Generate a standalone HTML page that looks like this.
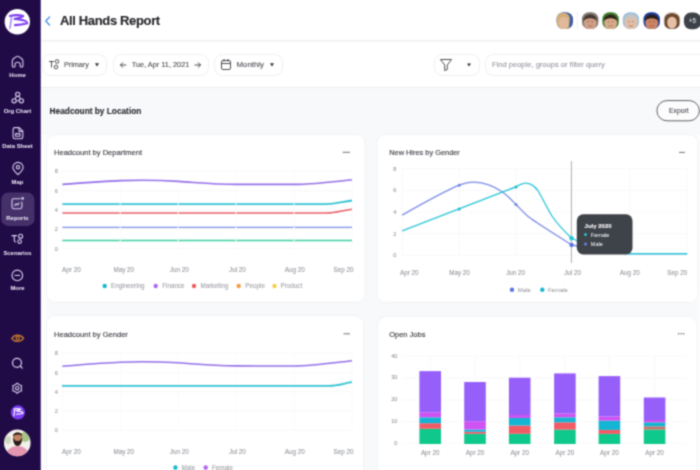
<!DOCTYPE html>
<html><head><meta charset="utf-8">
<style>
html,body{margin:0;padding:0;width:700px;height:470px;overflow:hidden;background:#f8f9fb;font-family:"Liberation Sans", sans-serif;}
#sb{position:absolute;left:0;top:0;width:40px;height:470px;background:#210b47;border-right:1px solid #5e4e8e;}
#hdr{position:absolute;left:41px;top:0;width:659px;height:40px;background:#fff;border-bottom:2px solid #f3f3f4;}
#tb{position:absolute;left:41px;top:42px;width:659px;height:45px;background:#fff;border-bottom:1px solid #ededee;}
.sbl{position:absolute;left:0;width:35px;text-align:center;color:#ece8f7;font-size:5.9px;font-weight:700;line-height:8px;height:8px;white-space:nowrap;}
svg{position:absolute;left:0;top:0;}
text{font-family:"Liberation Sans", sans-serif;}
#wrap{position:absolute;left:0;top:0;width:700px;height:470px;overflow:hidden;filter:url(#gb);}
</style></head><body><svg width="0" height="0" style="position:absolute"><filter id="gb" x="0" y="0" width="100%" height="100%" color-interpolation-filters="sRGB"><feConvolveMatrix order="3" kernelMatrix="0.04387 0.12171 0.04387 0.12171 0.33767 0.12171 0.04387 0.12171 0.04387" divisor="1" edgeMode="duplicate"/></filter></svg><div id="wrap">
<div id="sb"></div>
<div id="hdr"></div>
<div id="tb"></div>
<svg width="700" height="470" viewBox="0 0 700 470">
<text x="60.0" y="25.4" font-size="13" fill="#26262b" stroke="#26262b" stroke-width="0.12" font-weight="700" text-anchor="start" letter-spacing="-0.35" >All Hands Report</text>
<path d="M49.5,17 L45.8,21 L49.5,25" fill="none" stroke="#4a8fe7" stroke-width="1.3" stroke-linecap="round" stroke-linejoin="round"/>
<rect x="42.5" y="54.5" width="64.0" height="21.0" rx="8" fill="#fff" stroke="#eff0f3" stroke-width="1"/>
<rect x="113.5" y="54.5" width="95.0" height="21.0" rx="8" fill="#fff" stroke="#eff0f3" stroke-width="1"/>
<rect x="214.5" y="54.5" width="68.0" height="21.0" rx="8" fill="#fff" stroke="#eff0f3" stroke-width="1"/>
<rect x="434.5" y="54.5" width="45.0" height="21.0" rx="8" fill="#fff" stroke="#eff0f3" stroke-width="1"/>
<rect x="485.5" y="54.5" width="234.0" height="21.0" rx="8" fill="#fff" stroke="#eff0f3" stroke-width="1"/>
<text x="64.0" y="66.9" font-size="7.2" fill="#505258" stroke="#505258" stroke-width="0.12" font-weight="400" text-anchor="start" letter-spacing="0" >Primary</text>
<path d="M95,63.3 L99,63.3 L97,66.6 Z" fill="#2e3036"/>
<g fill="none" stroke="#3a3c42" stroke-width="0.9"><path d="M49,61.5 L54,61.5 M51.5,61.5 L51.5,67.5"/><circle cx="57" cy="61.5" r="1.8"/><circle cx="56" cy="67" r="1.8"/></g>
<path d="M126,65 L120.5,65 M122.8,62.7 L120.5,65 L122.8,67.3" fill="none" stroke="#3a3c42" stroke-width="0.9" stroke-linecap="round"/>
<text x="131.8" y="67.0" font-size="7.35" fill="#505258" stroke="#505258" stroke-width="0.12" font-weight="400" text-anchor="start" letter-spacing="0" >Tue, Apr 11, 2021</text>
<path d="M195,65 L200.5,65 M198.2,62.7 L200.5,65 L198.2,67.3" fill="none" stroke="#3a3c42" stroke-width="0.9" stroke-linecap="round"/>
<g fill="none" stroke="#3a3c42" stroke-width="0.9"><rect x="221.5" y="60.5" width="9" height="9" rx="1.5"/><path d="M221.5,63.5 L230.5,63.5 M224,59 L224,61.5 M228,59 L228,61.5"/></g>
<text x="236.6" y="67.1" font-size="7.8" fill="#505258" stroke="#505258" stroke-width="0.12" font-weight="400" text-anchor="start" letter-spacing="0" >Monthly</text>
<path d="M270,63.3 L274,63.3 L272,66.6 Z" fill="#2e3036"/>
<path d="M440.5,59.5 L451.5,59.5 L447.3,65 L447.3,69.5 L444.7,70.5 L444.7,65 Z" fill="none" stroke="#3a3c42" stroke-width="0.9" stroke-linejoin="round"/>
<path d="M467,63.6 L471,63.6 L469,66.6 Z" fill="#2e3036"/>
<text x="492.0" y="67.1" font-size="7.55" fill="#9a9ca3" stroke="#9a9ca3" stroke-width="0.12" font-weight="400" text-anchor="start" letter-spacing="0" >Find people, groups or filter query</text>
<text x="49.6" y="113.5" font-size="8.3" fill="#2b2c31" stroke="#2b2c31" stroke-width="0.12" font-weight="700" text-anchor="start" letter-spacing="0" >Headcount by Location</text>
<rect x="656.9" y="100.6" width="42.4" height="20.2" rx="10.1" fill="#fcfcfd" stroke="#606166" stroke-width="1"/>
<text x="669.0" y="112.8" font-size="6.75" fill="#3a3b40" stroke="#3a3b40" stroke-width="0.048" font-weight="400" text-anchor="start" letter-spacing="0" >Export</text>
<rect x="41" y="134.5" width="5.8" height="340" fill="#fcfcfd"/><rect x="697.3" y="134.5" width="3" height="340" fill="#fcfcfd"/>
<rect x="46.6" y="134.7" width="318.4" height="167.7" rx="8.5" fill="#fff" stroke="#eef0f3" stroke-width="0.8"/>
<rect x="377" y="134.7" width="321" height="167.7" rx="8.5" fill="#fff" stroke="#eef0f3" stroke-width="0.8"/>
<rect x="46.6" y="315.5" width="316.9" height="184.5" rx="8.5" fill="#fff" stroke="#eef0f3" stroke-width="0.8"/>
<rect x="377.6" y="316.6" width="319.4" height="183.39999999999998" rx="8.5" fill="#fff" stroke="#eef0f3" stroke-width="0.8"/>
<text x="54.0" y="155.0" font-size="7.55" fill="#3a3c42" stroke="#3a3c42" stroke-width="0.12" font-weight="400" text-anchor="start" letter-spacing="0" >Headcount by Department</text>
<path d="M342.6,152.3 L350,152.3" stroke="#6a6c71" stroke-width="0.95"/>
<path d="M62,248.5 L352,248.5" stroke="#f6f7f9" stroke-width="0.7"/>
<text x="56.4" y="250.5" font-size="5.6" fill="#8f9197" stroke="#8f9197" stroke-width="0.048" font-weight="400" text-anchor="middle" letter-spacing="0" >0</text>
<path d="M62,229.2 L352,229.2" stroke="#f6f7f9" stroke-width="0.7"/>
<text x="56.4" y="231.2" font-size="5.6" fill="#8f9197" stroke="#8f9197" stroke-width="0.048" font-weight="400" text-anchor="middle" letter-spacing="0" >2</text>
<path d="M62,209.9 L352,209.9" stroke="#f6f7f9" stroke-width="0.7"/>
<text x="56.4" y="211.9" font-size="5.6" fill="#8f9197" stroke="#8f9197" stroke-width="0.048" font-weight="400" text-anchor="middle" letter-spacing="0" >4</text>
<path d="M62,190.6 L352,190.6" stroke="#f6f7f9" stroke-width="0.7"/>
<text x="56.4" y="192.6" font-size="5.6" fill="#8f9197" stroke="#8f9197" stroke-width="0.048" font-weight="400" text-anchor="middle" letter-spacing="0" >6</text>
<path d="M62,171.3 L352,171.3" stroke="#f6f7f9" stroke-width="0.7"/>
<text x="56.4" y="173.3" font-size="5.6" fill="#8f9197" stroke="#8f9197" stroke-width="0.048" font-weight="400" text-anchor="middle" letter-spacing="0" >8</text>
<path d="M62.4,171.3 L62.4,248.5" stroke="#f9f9fb" stroke-width="0.7"/>
<path d="M120.3,171.3 L120.3,248.5" stroke="#f9f9fb" stroke-width="0.7"/>
<path d="M178.2,171.3 L178.2,248.5" stroke="#f9f9fb" stroke-width="0.7"/>
<path d="M236.2,171.3 L236.2,248.5" stroke="#f9f9fb" stroke-width="0.7"/>
<path d="M294.1,171.3 L294.1,248.5" stroke="#f9f9fb" stroke-width="0.7"/>
<path d="M352.0,171.3 L352.0,248.5" stroke="#f9f9fb" stroke-width="0.7"/>
<text x="71.4" y="271.9" font-size="6.3" fill="#8f9197" stroke="#8f9197" stroke-width="0.048" font-weight="400" text-anchor="middle" letter-spacing="0" >Apr 20</text>
<text x="123.8" y="271.9" font-size="6.3" fill="#8f9197" stroke="#8f9197" stroke-width="0.048" font-weight="400" text-anchor="middle" letter-spacing="0" >May 20</text>
<text x="179.3" y="271.9" font-size="6.3" fill="#8f9197" stroke="#8f9197" stroke-width="0.048" font-weight="400" text-anchor="middle" letter-spacing="0" >Jun 20</text>
<text x="237.4" y="271.9" font-size="6.3" fill="#8f9197" stroke="#8f9197" stroke-width="0.048" font-weight="400" text-anchor="middle" letter-spacing="0" >Jul 20</text>
<text x="294.8" y="271.9" font-size="6.3" fill="#8f9197" stroke="#8f9197" stroke-width="0.048" font-weight="400" text-anchor="middle" letter-spacing="0" >Aug 20</text>
<text x="343.6" y="271.9" font-size="6.3" fill="#8f9197" stroke="#8f9197" stroke-width="0.048" font-weight="400" text-anchor="middle" letter-spacing="0" >Sep 20</text>
<path d="M62.4,240.5 C110.7,240.5 303.7,240.5 352.0,240.5" fill="none" stroke="#3ccfa2" stroke-width="1.6"/>
<path d="M62.4,227.3 C110.7,227.3 303.7,227.3 352.0,227.3" fill="none" stroke="#7f90e6" stroke-width="1.3"/>
<path d="M62.4,213 L326,213 C336,213 342,210.5 352,209.2" fill="none" stroke="#e9606a" stroke-width="1.6"/>
<path d="M62.4,204.1 L326,204.1 C336,204.1 342,201.7 352,200.5" fill="none" stroke="#34c3d4" stroke-width="1.8"/>
<path d="M62.4,184.4 C85,182.6 105,181 120.3,180.6 C135,180.2 155,179.9 178.2,181.4 C200,182.8 215,184.4 236.2,184.4 L294.1,184.4 C312,184.4 330,182.2 352,179.7" fill="none" stroke="#9470e8" stroke-width="1.6"/>
<circle cx="120.3" cy="240.5" r="0.9" fill="#fff" opacity="0.7"/>
<circle cx="120.3" cy="227.3" r="0.9" fill="#fff" opacity="0.7"/>
<circle cx="120.3" cy="213.0" r="0.9" fill="#fff" opacity="0.7"/>
<circle cx="120.3" cy="204.1" r="0.9" fill="#fff" opacity="0.7"/>
<circle cx="178.2" cy="240.5" r="0.9" fill="#fff" opacity="0.7"/>
<circle cx="178.2" cy="227.3" r="0.9" fill="#fff" opacity="0.7"/>
<circle cx="178.2" cy="213.0" r="0.9" fill="#fff" opacity="0.7"/>
<circle cx="178.2" cy="204.1" r="0.9" fill="#fff" opacity="0.7"/>
<circle cx="236.2" cy="240.5" r="0.9" fill="#fff" opacity="0.7"/>
<circle cx="236.2" cy="227.3" r="0.9" fill="#fff" opacity="0.7"/>
<circle cx="236.2" cy="213.0" r="0.9" fill="#fff" opacity="0.7"/>
<circle cx="236.2" cy="204.1" r="0.9" fill="#fff" opacity="0.7"/>
<circle cx="294.1" cy="240.5" r="0.9" fill="#fff" opacity="0.7"/>
<circle cx="294.1" cy="227.3" r="0.9" fill="#fff" opacity="0.7"/>
<circle cx="294.1" cy="213.0" r="0.9" fill="#fff" opacity="0.7"/>
<circle cx="294.1" cy="204.1" r="0.9" fill="#fff" opacity="0.7"/>
<circle cx="104.7" cy="286" r="2.2" fill="#17b7d0"/>
<text x="111.0" y="288.3" font-size="6.3" fill="#9a9ca2" stroke="#9a9ca2" stroke-width="0.048" font-weight="400" text-anchor="start" letter-spacing="0" >Engineering</text>
<circle cx="155.7" cy="286" r="2.2" fill="#b065f0"/>
<text x="162.2" y="288.3" font-size="6.3" fill="#9a9ca2" stroke="#9a9ca2" stroke-width="0.048" font-weight="400" text-anchor="start" letter-spacing="0" >Finance</text>
<circle cx="194" cy="286" r="2.2" fill="#ef5d5d"/>
<text x="200.5" y="288.3" font-size="6.3" fill="#9a9ca2" stroke="#9a9ca2" stroke-width="0.048" font-weight="400" text-anchor="start" letter-spacing="0" >Marketing</text>
<circle cx="238.7" cy="286" r="2.2" fill="#f49a45"/>
<text x="245.3" y="288.3" font-size="6.3" fill="#9a9ca2" stroke="#9a9ca2" stroke-width="0.048" font-weight="400" text-anchor="start" letter-spacing="0" >People</text>
<circle cx="274.5" cy="286" r="2.2" fill="#f7cd4c"/>
<text x="280.5" y="288.3" font-size="6.3" fill="#9a9ca2" stroke="#9a9ca2" stroke-width="0.048" font-weight="400" text-anchor="start" letter-spacing="0" >Product</text>
<text x="54.0" y="336.6" font-size="7.55" fill="#3a3c42" stroke="#3a3c42" stroke-width="0.12" font-weight="400" text-anchor="start" letter-spacing="0" >Headcount by Gender</text>
<path d="M343.5,333.8 L350,333.8" stroke="#6a6c71" stroke-width="0.95"/>
<path d="M62,430.4 L352,430.4" stroke="#f6f7f9" stroke-width="0.7"/>
<text x="56.4" y="432.4" font-size="5.6" fill="#8f9197" stroke="#8f9197" stroke-width="0.048" font-weight="400" text-anchor="middle" letter-spacing="0" >0</text>
<path d="M62,411.1 L352,411.1" stroke="#f6f7f9" stroke-width="0.7"/>
<text x="56.4" y="413.1" font-size="5.6" fill="#8f9197" stroke="#8f9197" stroke-width="0.048" font-weight="400" text-anchor="middle" letter-spacing="0" >2</text>
<path d="M62,391.8 L352,391.8" stroke="#f6f7f9" stroke-width="0.7"/>
<text x="56.4" y="393.8" font-size="5.6" fill="#8f9197" stroke="#8f9197" stroke-width="0.048" font-weight="400" text-anchor="middle" letter-spacing="0" >4</text>
<path d="M62,372.5 L352,372.5" stroke="#f6f7f9" stroke-width="0.7"/>
<text x="56.4" y="374.5" font-size="5.6" fill="#8f9197" stroke="#8f9197" stroke-width="0.048" font-weight="400" text-anchor="middle" letter-spacing="0" >6</text>
<path d="M62,353.2 L352,353.2" stroke="#f6f7f9" stroke-width="0.7"/>
<text x="56.4" y="355.2" font-size="5.6" fill="#8f9197" stroke="#8f9197" stroke-width="0.048" font-weight="400" text-anchor="middle" letter-spacing="0" >8</text>
<path d="M62.4,353.2 L62.4,430.4" stroke="#f9f9fb" stroke-width="0.7"/>
<path d="M120.3,353.2 L120.3,430.4" stroke="#f9f9fb" stroke-width="0.7"/>
<path d="M178.2,353.2 L178.2,430.4" stroke="#f9f9fb" stroke-width="0.7"/>
<path d="M236.2,353.2 L236.2,430.4" stroke="#f9f9fb" stroke-width="0.7"/>
<path d="M294.1,353.2 L294.1,430.4" stroke="#f9f9fb" stroke-width="0.7"/>
<path d="M352.0,353.2 L352.0,430.4" stroke="#f9f9fb" stroke-width="0.7"/>
<text x="71.4" y="453.8" font-size="6.3" fill="#8f9197" stroke="#8f9197" stroke-width="0.048" font-weight="400" text-anchor="middle" letter-spacing="0" >Apr 20</text>
<text x="123.8" y="453.8" font-size="6.3" fill="#8f9197" stroke="#8f9197" stroke-width="0.048" font-weight="400" text-anchor="middle" letter-spacing="0" >May 20</text>
<text x="179.3" y="453.8" font-size="6.3" fill="#8f9197" stroke="#8f9197" stroke-width="0.048" font-weight="400" text-anchor="middle" letter-spacing="0" >Jun 20</text>
<text x="237.4" y="453.8" font-size="6.3" fill="#8f9197" stroke="#8f9197" stroke-width="0.048" font-weight="400" text-anchor="middle" letter-spacing="0" >Jul 20</text>
<text x="294.8" y="453.8" font-size="6.3" fill="#8f9197" stroke="#8f9197" stroke-width="0.048" font-weight="400" text-anchor="middle" letter-spacing="0" >Aug 20</text>
<text x="343.6" y="453.8" font-size="6.3" fill="#8f9197" stroke="#8f9197" stroke-width="0.048" font-weight="400" text-anchor="middle" letter-spacing="0" >Sep 20</text>
<path d="M62,385.8 L329,385.8 C338,385.8 344,383.3 352,382.2" fill="none" stroke="#34c3d4" stroke-width="1.8"/>
<path d="M62.4,366.3 C85,364.4 105,362.6 120.3,362.2 C135,361.6 155,361.5 178.2,362.8 C200,364.4 215,365.8 236.2,365.9 L294.1,366 C312,366 330,363.3 352,360.8" fill="none" stroke="#9470e8" stroke-width="1.6"/>
<circle cx="175.4" cy="467.5" r="2.2" fill="#17b7d0"/>
<text x="181.5" y="469.8" font-size="6.3" fill="#9a9ca2" stroke="#9a9ca2" stroke-width="0.048" font-weight="400" text-anchor="start" letter-spacing="0" >Male</text>
<circle cx="205.7" cy="467.5" r="2.2" fill="#b065f0"/>
<text x="212.0" y="469.8" font-size="6.3" fill="#9a9ca2" stroke="#9a9ca2" stroke-width="0.048" font-weight="400" text-anchor="start" letter-spacing="0" >Female</text>
<text x="389.2" y="154.9" font-size="7.4" fill="#3a3c42" stroke="#3a3c42" stroke-width="0.12" font-weight="400" text-anchor="start" letter-spacing="0" >New Hires by Gender</text>
<path d="M679,152.4 L685,152.4" stroke="#6a6c71" stroke-width="0.95"/>
<path d="M402,255.2 L687,255.2" stroke="#f6f7f9" stroke-width="0.7"/>
<text x="394.8" y="257.2" font-size="5.6" fill="#8f9197" stroke="#8f9197" stroke-width="0.048" font-weight="400" text-anchor="middle" letter-spacing="0" >0</text>
<path d="M402,233.6 L687,233.6" stroke="#f6f7f9" stroke-width="0.7"/>
<text x="394.8" y="235.6" font-size="5.6" fill="#8f9197" stroke="#8f9197" stroke-width="0.048" font-weight="400" text-anchor="middle" letter-spacing="0" >2</text>
<path d="M402,212.0 L687,212.0" stroke="#f6f7f9" stroke-width="0.7"/>
<text x="394.8" y="214.0" font-size="5.6" fill="#8f9197" stroke="#8f9197" stroke-width="0.048" font-weight="400" text-anchor="middle" letter-spacing="0" >4</text>
<path d="M402,190.4 L687,190.4" stroke="#f6f7f9" stroke-width="0.7"/>
<text x="394.8" y="192.4" font-size="5.6" fill="#8f9197" stroke="#8f9197" stroke-width="0.048" font-weight="400" text-anchor="middle" letter-spacing="0" >6</text>
<path d="M402,168.8 L687,168.8" stroke="#f6f7f9" stroke-width="0.7"/>
<text x="394.8" y="170.8" font-size="5.6" fill="#8f9197" stroke="#8f9197" stroke-width="0.048" font-weight="400" text-anchor="middle" letter-spacing="0" >8</text>
<path d="M402.2,168.8 L402.2,255.2" stroke="#f6f7f9" stroke-width="0.7"/>
<path d="M459.2,168.8 L459.2,255.2" stroke="#f6f7f9" stroke-width="0.7"/>
<path d="M516.1,168.8 L516.1,255.2" stroke="#f6f7f9" stroke-width="0.7"/>
<path d="M571.4,168.8 L571.4,255.2" stroke="#f6f7f9" stroke-width="0.7"/>
<path d="M629.7,168.8 L629.7,255.2" stroke="#f6f7f9" stroke-width="0.7"/>
<path d="M687.2,168.8 L687.2,255.2" stroke="#f6f7f9" stroke-width="0.7"/>
<text x="409.3" y="275.4" font-size="6.3" fill="#8f9197" stroke="#8f9197" stroke-width="0.048" font-weight="400" text-anchor="middle" letter-spacing="0" >Apr 20</text>
<text x="459.5" y="275.4" font-size="6.3" fill="#8f9197" stroke="#8f9197" stroke-width="0.048" font-weight="400" text-anchor="middle" letter-spacing="0" >May 20</text>
<text x="515.6" y="275.4" font-size="6.3" fill="#8f9197" stroke="#8f9197" stroke-width="0.048" font-weight="400" text-anchor="middle" letter-spacing="0" >Jun 20</text>
<text x="572.6" y="275.4" font-size="6.3" fill="#8f9197" stroke="#8f9197" stroke-width="0.048" font-weight="400" text-anchor="middle" letter-spacing="0" >Jul 20</text>
<text x="629.7" y="275.4" font-size="6.3" fill="#8f9197" stroke="#8f9197" stroke-width="0.048" font-weight="400" text-anchor="middle" letter-spacing="0" >Aug 20</text>
<text x="677.2" y="275.4" font-size="6.3" fill="#8f9197" stroke="#8f9197" stroke-width="0.048" font-weight="400" text-anchor="middle" letter-spacing="0" >Sep 20</text>
<path d="M402.2,215.1 C420,205 445,191 459.2,185.2 C466,182.5 470,182 474,182.1 C484,182.4 494,186 502.5,192 C508,196 512,200.5 516,204.5 C520,208.5 523,212 527.5,216 C535,222 550,231 571.4,244.7 C590,250 615,253.7 629.7,253.7 L687.2,253.7" fill="none" stroke="#7b8ae6" stroke-width="1.25"/>
<path d="M402.2,230.8 L513,188 C518,186 521.5,183.2 525.5,183.1 C530,183 534,185.5 537.5,190 C542,197 547,208 552,216 C556,222 562,229 571.4,238 C590,248 615,253.7 629.7,253.7 L687.2,253.7" fill="none" stroke="#2ec6d8" stroke-width="1.35"/>
<circle cx="459.2" cy="185.2" r="1.5" fill="#6f88e0"/><circle cx="516" cy="204.5" r="1.5" fill="#6f88e0"/><circle cx="459.2" cy="209" r="1.5" fill="#1ab8cc"/><circle cx="516" cy="186.9" r="1.5" fill="#1ab8cc"/>
<path d="M571.4,161 L571.4,263" stroke="#a4a6aa" stroke-width="0.9"/>
<circle cx="571.6" cy="238.2" r="2.2" fill="#24c4d6"/>
<circle cx="571.6" cy="244.9" r="2.2" fill="#5b73e3"/>
<rect x="576.8" y="214.3" width="55.7" height="40.2" rx="6.5" fill="#3e4249"/>
<text x="584.6" y="227.5" font-size="6.0" fill="#ffffff" stroke="#ffffff" stroke-width="0.048" font-weight="700" text-anchor="start" letter-spacing="0" >July 2020</text>
<circle cx="585.5" cy="234.6" r="1.5" fill="#24c4d6"/>
<text x="590.8" y="236.6" font-size="5.6" fill="#e6e7ea" stroke="#e6e7ea" stroke-width="0.048" font-weight="400" text-anchor="start" letter-spacing="0" >Female</text>
<circle cx="585.5" cy="243.9" r="1.5" fill="#6f80e8"/>
<text x="590.8" y="245.9" font-size="5.6" fill="#e6e7ea" stroke="#e6e7ea" stroke-width="0.048" font-weight="400" text-anchor="start" letter-spacing="0" >Male</text>
<circle cx="512" cy="289.7" r="2.2" fill="#5b73e3"/>
<text x="517.8" y="291.9" font-size="6.0" fill="#9a9ca2" stroke="#9a9ca2" stroke-width="0.048" font-weight="400" text-anchor="start" letter-spacing="0" >Male</text>
<circle cx="542.3" cy="289.7" r="2.2" fill="#17b7d0"/>
<text x="547.9" y="291.9" font-size="6.0" fill="#9a9ca2" stroke="#9a9ca2" stroke-width="0.048" font-weight="400" text-anchor="start" letter-spacing="0" >Female</text>
<text x="389.2" y="336.8" font-size="7.5" fill="#3a3c42" stroke="#3a3c42" stroke-width="0.12" font-weight="400" text-anchor="start" letter-spacing="0" >Open Jobs</text>
<g fill="#55575c"><circle cx="678.6" cy="333.8" r="0.7"/><circle cx="681.1" cy="333.8" r="0.7"/><circle cx="683.6" cy="333.8" r="0.7"/></g>
<path d="M402,443.5 L687,443.5" stroke="#f6f7f9" stroke-width="0.7"/>
<text x="397.4" y="444.7" font-size="5.6" fill="#8f9197" stroke="#8f9197" stroke-width="0.048" font-weight="400" text-anchor="end" letter-spacing="0" >0</text>
<path d="M402,421.7 L687,421.7" stroke="#f6f7f9" stroke-width="0.7"/>
<text x="397.4" y="422.9" font-size="5.6" fill="#8f9197" stroke="#8f9197" stroke-width="0.048" font-weight="400" text-anchor="end" letter-spacing="0" >10</text>
<path d="M402,399.9 L687,399.9" stroke="#f6f7f9" stroke-width="0.7"/>
<text x="397.4" y="401.1" font-size="5.6" fill="#8f9197" stroke="#8f9197" stroke-width="0.048" font-weight="400" text-anchor="end" letter-spacing="0" >20</text>
<path d="M402,378.1 L687,378.1" stroke="#f6f7f9" stroke-width="0.7"/>
<text x="397.4" y="379.3" font-size="5.6" fill="#8f9197" stroke="#8f9197" stroke-width="0.048" font-weight="400" text-anchor="end" letter-spacing="0" >30</text>
<path d="M402,356.3 L687,356.3" stroke="#f6f7f9" stroke-width="0.7"/>
<text x="397.4" y="357.5" font-size="5.6" fill="#8f9197" stroke="#8f9197" stroke-width="0.048" font-weight="400" text-anchor="end" letter-spacing="0" >40</text>
<path d="M430.2,355.6 L430.2,447" stroke="#f6f7f9" stroke-width="0.7"/>
<text x="430.2" y="454.5" font-size="6.3" fill="#8f9197" stroke="#8f9197" stroke-width="0.048" font-weight="400" text-anchor="middle" letter-spacing="0" >Apr 20</text>
<path d="M475.0,355.6 L475.0,447" stroke="#f6f7f9" stroke-width="0.7"/>
<text x="475.0" y="454.5" font-size="6.3" fill="#8f9197" stroke="#8f9197" stroke-width="0.048" font-weight="400" text-anchor="middle" letter-spacing="0" >Apr 20</text>
<path d="M519.7,355.6 L519.7,447" stroke="#f6f7f9" stroke-width="0.7"/>
<text x="519.7" y="454.5" font-size="6.3" fill="#8f9197" stroke="#8f9197" stroke-width="0.048" font-weight="400" text-anchor="middle" letter-spacing="0" >Apr 20</text>
<path d="M564.9,355.6 L564.9,447" stroke="#f6f7f9" stroke-width="0.7"/>
<text x="564.9" y="454.5" font-size="6.3" fill="#8f9197" stroke="#8f9197" stroke-width="0.048" font-weight="400" text-anchor="middle" letter-spacing="0" >Apr 20</text>
<path d="M609.4,355.6 L609.4,447" stroke="#f6f7f9" stroke-width="0.7"/>
<text x="609.4" y="454.5" font-size="6.3" fill="#8f9197" stroke="#8f9197" stroke-width="0.048" font-weight="400" text-anchor="middle" letter-spacing="0" >Apr 20</text>
<path d="M654.6,355.6 L654.6,447" stroke="#f6f7f9" stroke-width="0.7"/>
<text x="654.6" y="454.5" font-size="6.3" fill="#8f9197" stroke="#8f9197" stroke-width="0.048" font-weight="400" text-anchor="middle" letter-spacing="0" >Apr 20</text>
<rect x="419.4" y="428.8" width="21.6" height="15.2" fill="#0fc98c"/>
<rect x="419.4" y="423.2" width="21.6" height="5.6" fill="#f25a66"/>
<rect x="419.4" y="417.3" width="21.6" height="5.9" fill="#14b5d3"/>
<rect x="419.4" y="412.3" width="21.6" height="5.0" fill="#cf52f2"/>
<rect x="419.4" y="371.1" width="21.6" height="41.2" fill="#975ffa"/>
<rect x="464.2" y="433.8" width="21.6" height="10.2" fill="#0fc98c"/>
<rect x="464.2" y="431.8" width="21.6" height="2.0" fill="#f25a66"/>
<rect x="464.2" y="429.5" width="21.6" height="2.3" fill="#14b5d3"/>
<rect x="464.2" y="421.2" width="21.6" height="8.3" fill="#cf52f2"/>
<rect x="464.2" y="382.0" width="21.6" height="39.2" fill="#975ffa"/>
<rect x="508.9" y="433.8" width="21.6" height="10.2" fill="#0fc98c"/>
<rect x="508.9" y="425.5" width="21.6" height="8.3" fill="#f25a66"/>
<rect x="508.9" y="418.0" width="21.6" height="7.5" fill="#14b5d3"/>
<rect x="508.9" y="415.0" width="21.6" height="3.0" fill="#cf52f2"/>
<rect x="508.9" y="377.7" width="21.6" height="37.3" fill="#975ffa"/>
<rect x="554.1" y="429.6" width="21.6" height="14.4" fill="#0fc98c"/>
<rect x="554.1" y="422.3" width="21.6" height="7.3" fill="#f25a66"/>
<rect x="554.1" y="417.3" width="21.6" height="5.0" fill="#14b5d3"/>
<rect x="554.1" y="413.4" width="21.6" height="3.9" fill="#cf52f2"/>
<rect x="554.1" y="373.4" width="21.6" height="40.0" fill="#975ffa"/>
<rect x="598.6" y="433.9" width="21.6" height="10.1" fill="#0fc98c"/>
<rect x="598.6" y="429.9" width="21.6" height="4.0" fill="#f25a66"/>
<rect x="598.6" y="420.6" width="21.6" height="9.3" fill="#14b5d3"/>
<rect x="598.6" y="416.4" width="21.6" height="4.2" fill="#cf52f2"/>
<rect x="598.6" y="376.1" width="21.6" height="40.3" fill="#975ffa"/>
<rect x="643.8" y="429.6" width="21.6" height="14.4" fill="#0fc98c"/>
<rect x="643.8" y="426.3" width="21.6" height="3.3" fill="#c2776a"/>
<rect x="643.8" y="422.3" width="21.6" height="4.0" fill="#14b5d3"/>
<rect x="643.8" y="420.0" width="21.6" height="2.3" fill="#cf52f2"/>
<rect x="643.8" y="397.5" width="21.6" height="22.5" fill="#975ffa"/>
<circle cx="453.5" cy="472.4" r="2.1" fill="#17b7d0"/>
<text x="459.0" y="474.9" font-size="6.3" fill="#a8aab0" stroke="#a8aab0" stroke-width="0.048" font-weight="400" text-anchor="start" letter-spacing="0" >Engineering</text>
<circle cx="506" cy="472.4" r="2.1" fill="#b065f0"/>
<text x="511.5" y="474.9" font-size="6.3" fill="#a8aab0" stroke="#a8aab0" stroke-width="0.048" font-weight="400" text-anchor="start" letter-spacing="0" >Finance</text>
<circle cx="549.5" cy="472.4" r="2.1" fill="#ef5d5d"/>
<text x="555.0" y="474.9" font-size="6.3" fill="#a8aab0" stroke="#a8aab0" stroke-width="0.048" font-weight="400" text-anchor="start" letter-spacing="0" >Marketing</text>
<circle cx="588.5" cy="472.4" r="2.1" fill="#f49a45"/>
<text x="594.0" y="474.9" font-size="6.3" fill="#a8aab0" stroke="#a8aab0" stroke-width="0.048" font-weight="400" text-anchor="start" letter-spacing="0" >People</text>
<circle cx="625" cy="472.4" r="2.1" fill="#f7cd4c"/>
<text x="630.5" y="474.9" font-size="6.3" fill="#a8aab0" stroke="#a8aab0" stroke-width="0.048" font-weight="400" text-anchor="start" letter-spacing="0" >Product</text>
<clipPath id="a0"><rect x="556.6" y="12.3" width="16.4" height="16.8" rx="7"/></clipPath>
<g clip-path="url(#a0)"><rect x="555.8" y="11.7" width="18" height="18" fill="#3d5aa6"/><path d="M556.3,29.7 L556.3,18.7 C556.3,10.7 570.8,10.7 569.8,19.7 L568.8,29.7 Z" fill="#cfae78"/><ellipse cx="563.6" cy="22.9" rx="5.2" ry="6.4" fill="#e2b89a"/><path d="M558.3,19.7 C560.8,15.7 566.8,15.7 569.3,18.7 C566.8,13.7 559.8,13.7 558.3,19.7 Z" fill="#cfae78"/></g>
<clipPath id="a1"><rect x="582.0" y="12.3" width="16.4" height="16.8" rx="7"/></clipPath>
<g clip-path="url(#a1)"><rect x="581.2" y="11.7" width="18" height="18" fill="#7d7874"/><ellipse cx="590.2" cy="22.7" rx="6.4" ry="7.6" fill="#cf9f86"/><path d="M583.4,21.2 C583.2,12.2 597.2,12.2 597.0,21.2 C594.7,17.2 585.7,17.2 583.4,21.2 Z" fill="#463730"/><path d="M587.4,21.7 L589.0,21.7 M591.4,21.7 L593.0,21.7" stroke="#5a3a2a" stroke-width="0.7" opacity="0.7"/><path d="M588.0,25.7 Q590.2,26.7 592.4,25.7" stroke="#8a5040" stroke-width="0.7" fill="none" opacity="0.8"/></g>
<clipPath id="a2"><rect x="602.4" y="12.3" width="16.4" height="16.8" rx="7"/></clipPath>
<g clip-path="url(#a2)"><rect x="601.6" y="11.7" width="18" height="18" fill="#3f7d2e"/><ellipse cx="610.6" cy="22.7" rx="6.4" ry="7.6" fill="#d9aa8b"/><path d="M603.8,21.2 C603.6,12.2 617.6,12.2 617.4,21.2 C615.1,17.2 606.1,17.2 603.8,21.2 Z" fill="#2f241c"/><path d="M607.8,21.7 L609.4,21.7 M611.8,21.7 L613.4,21.7" stroke="#5a3a2a" stroke-width="0.7" opacity="0.7"/><path d="M608.4,25.7 Q610.6,26.7 612.8,25.7" stroke="#8a5040" stroke-width="0.7" fill="none" opacity="0.8"/></g>
<clipPath id="a3"><rect x="622.7" y="12.3" width="16.4" height="16.8" rx="7"/></clipPath>
<g clip-path="url(#a3)"><rect x="621.9" y="11.7" width="18" height="18" fill="#9fc2de"/><ellipse cx="630.9" cy="22.7" rx="6.4" ry="7.6" fill="#e0bfaa"/><path d="M624.1,21.2 C623.9,12.2 637.9,12.2 637.7,21.2 C635.4,17.2 626.4,17.2 624.1,21.2 Z" fill="#c9c4bf"/><path d="M628.1,21.7 L629.7,21.7 M632.1,21.7 L633.7,21.7" stroke="#5a3a2a" stroke-width="0.7" opacity="0.7"/><path d="M628.7,25.7 Q630.9,26.7 633.1,25.7" stroke="#8a5040" stroke-width="0.7" fill="none" opacity="0.8"/></g>
<clipPath id="a4"><rect x="643.5" y="12.3" width="16.4" height="16.8" rx="7"/></clipPath>
<g clip-path="url(#a4)"><rect x="642.7" y="11.7" width="18" height="18" fill="#1b3a99"/><ellipse cx="651.7" cy="22.7" rx="6.4" ry="7.6" fill="#cc8664"/><path d="M644.9,21.2 C644.7,12.2 658.7,12.2 658.5,21.2 C656.2,17.2 647.2,17.2 644.9,21.2 Z" fill="#2a1f18"/><path d="M648.9,21.7 L650.5,21.7 M652.9,21.7 L654.5,21.7" stroke="#5a3a2a" stroke-width="0.7" opacity="0.7"/><path d="M649.5,25.7 Q651.7,26.7 653.9,25.7" stroke="#8a5040" stroke-width="0.7" fill="none" opacity="0.8"/></g>
<clipPath id="a5"><rect x="663.8" y="12.3" width="16.4" height="16.8" rx="7"/></clipPath>
<g clip-path="url(#a5)"><rect x="663.0" y="11.7" width="18" height="18" fill="#cfc3b4"/><path d="M664.5,29.7 L664.5,19.7 C664.5,11.2 679.5,11.2 679.5,19.7 L679.5,29.7 Z" fill="#6a4a32"/><ellipse cx="672.0" cy="22.5" rx="4.8" ry="6.2" fill="#e6c0a4"/><path d="M667.0,20.2 C669.0,15.7 675.0,15.7 677.0,20.2 C676.0,13.7 668.0,13.7 667.0,20.2 Z" fill="#6a4a32"/></g>
<path d="M577.3,12 L577.3,29.5" stroke="#eeeff1" stroke-width="1"/>
<rect x="683.9" y="12.4" width="17" height="16.8" rx="7" fill="#3d4249"/>
<text x="692.4" y="23.1" font-size="6.4" fill="#e4e6ea" stroke="#e4e6ea" stroke-width="0.048" font-weight="400" text-anchor="middle" letter-spacing="0" >+5</text>
</svg>
<div id="sbwrap" style="position:absolute;left:0;top:0;width:41px;height:470px;">
<svg width="41" height="470" viewBox="0 0 41 470">
<circle cx="17.3" cy="21.8" r="12.7" fill="#fff"/>
<defs><linearGradient id="lg" x1="0" y1="0" x2="0" y2="1"><stop offset="0" stop-color="#7a3ff0"/><stop offset="1" stop-color="#b38af7"/></linearGradient></defs>
<path d="M9.9,16 C14,15 19.5,14.9 23.2,16 C22.5,17.2 18,18.3 14.5,19 C18.5,19.3 22.5,19.9 25,20.9 C26.4,21.6 27.2,22.5 27.2,23.3 C23.5,24.4 19,25 15,25.1" fill="none" stroke="#7a3cf0" stroke-width="2.1" stroke-linecap="round" stroke-linejoin="round"/><path d="M11.4,17.8 C11,21 10.5,25 9.9,28.3" fill="none" stroke="#a787f3" stroke-width="1.5" stroke-linecap="round"/>
<path d="M12.3,66 L12.3,61 Q12.3,59.6 13.4,58.8 L16.4,56.6 Q17.6,55.8 18.8,56.6 L21.8,58.8 Q22.9,59.6 22.9,61 L22.9,66 Q22.9,67 21.9,67 L20.9,67 Q20.1,67 20.1,66 L20.1,64.2 C20.1,61.6 15.1,61.6 15.1,64.2 L15.1,66 Q15.1,67 14.3,67 L13.3,67 Q12.3,67 12.3,66 Z" fill="none" stroke="#d8d0ee" stroke-width="1.1" stroke-linejoin="round"/>
<g fill="none" stroke="#d8d0ee" stroke-width="1.1"><circle cx="17.7" cy="94.3" r="2.1"/><circle cx="14.1" cy="100.8" r="2.1"/><circle cx="21.4" cy="100.8" r="2.1"/><path d="M16.7,96.1 L15.1,98.9 M18.7,96.1 L20.4,98.9 M16.2,100.8 L19.3,100.8"/></g>
<g fill="none" stroke="#d8d0ee" stroke-width="1.1" stroke-linejoin="round"><path d="M14.8,127.6 L19.2,127.6 L22.8,131.2 L22.8,137 Q22.8,138.7 21.1,138.7 L14.8,138.7 Q13.1,138.7 13.1,137 L13.1,129.3 Q13.1,127.6 14.8,127.6 Z"/><path d="M19,127.8 L19,131.4 L22.6,131.4"/><path d="M15.6,133.6 L20,133.6 L20,136.2 L15.6,136.2 Z"/></g>
<g fill="none" stroke="#d8d0ee" stroke-width="1.1"><path d="M18,174.5 C14.5,171.5 12.9,169.3 12.9,167.2 C12.9,164.5 15.2,162.4 18,162.4 C20.8,162.4 23.1,164.5 23.1,167.2 C23.1,169.3 21.5,171.5 18,174.5 Z"/><circle cx="18" cy="167.3" r="1.7"/></g>
<rect x="1.2" y="192.6" width="33.3" height="33.3" rx="7" fill="#45306a"/>
<g fill="none" stroke="#d8d0ee" stroke-width="1.1" stroke-linejoin="round"><path d="M20.5,198.8 L13.6,198.8 Q12,198.8 12,200.4 L12,207.1 Q12,208.7 13.6,208.7 L20.3,208.7 Q21.9,208.7 21.9,207.1 L21.9,201.8"/><path d="M14.4,206 L16.2,203.6 L17.6,205 L19.4,202.7"/></g><circle cx="22.6" cy="198.4" r="1.3" fill="#d8d0ee"/>
<g fill="none" stroke="#d8d0ee" stroke-width="1.1"><path d="M11.6,235.6 L17,235.6 M14.3,235.6 L14.3,240.5 Q14.3,242 16,242"/><circle cx="20.6" cy="236.2" r="2"/><circle cx="19.6" cy="241.6" r="1.8"/></g>
<g fill="none" stroke="#d8d0ee" stroke-width="1.1"><circle cx="17.3" cy="275.4" r="5.3"/><path d="M14.6,275.4 L20,275.4"/></g>
<g fill="none" stroke="#c0762c" stroke-width="1.3"><path d="M11.8,338.3 C14.5,334.2 20.5,334.2 23.6,338.3 C20.5,342.4 14.5,342.4 11.8,338.3 Z"/><circle cx="17.7" cy="338.3" r="1.6"/></g>
<g fill="none" stroke="#d8d0ee" stroke-width="1.2"><circle cx="17" cy="362.8" r="4.5"/><path d="M20.2,366 L22.2,368.1" stroke-linecap="round"/></g>
<g fill="none" stroke="#d8d0ee" stroke-width="1.1"><path d="M17.20,393.30 L15.20,391.66 L12.78,390.75 L13.20,388.20 L12.78,385.65 L15.20,384.74 L17.20,383.10 L19.20,384.74 L21.62,385.65 L21.20,388.20 L21.62,390.75 L19.20,391.66 Z" stroke-linejoin="round"/><circle cx="17.2" cy="388.2" r="1.7"/></g>
<circle cx="17.9" cy="412.4" r="7.1" fill="#7b3cf3"/>
<path d="M13.9,409.1 C16,408.6 19,408.6 21,409.2 L16.3,410.8 C18.3,411 20.5,411.4 21.8,411.8 C22.6,412.2 23,412.8 23,413.2 C21,413.9 18.8,414.2 16.6,414.2 M14.6,410 C14.3,412 14.1,414 13.9,415.8" fill="none" stroke="#fff" stroke-width="1.2" stroke-linecap="round" stroke-linejoin="round"/>
<clipPath id="av"><circle cx="17.3" cy="442.9" r="13.3"/></clipPath>
<g clip-path="url(#av)"><rect x="0" y="425" width="40" height="40" fill="#f3f1ec"/><ellipse cx="25" cy="437" rx="5" ry="5" fill="#93b86c" opacity="0.8"/><ellipse cx="8" cy="440" rx="3" ry="4" fill="#b7c9a0" opacity="0.6"/><path d="M5,460 C5.5,450 10,446.5 17.5,446 C25,446.5 29.5,450 30,460 Z" fill="#e496b0"/><ellipse cx="17.6" cy="437.8" rx="4.6" ry="5.6" fill="#bf8264"/><path d="M13,437 C13,443 15,446 17.6,446 C20.2,446 22.2,443 22.2,437 C21,440.5 19.5,441 17.6,441 C15.7,441 14.2,440.5 13,437 Z" fill="#2a1c16"/><path d="M13,436.5 C12.5,431.5 22.5,431 22.2,436 C20.5,433.8 15,433.8 13,436.5 Z" fill="#2a1c16"/></g>
</svg>
<div class="sbl" style="top:71.10000000000001px">Home</div>
<div class="sbl" style="top:106.9px">Org Chart</div>
<div class="sbl" style="top:142.39999999999998px">Data Sheet</div>
<div class="sbl" style="top:178.0px">Map</div>
<div class="sbl" style="top:214.39999999999998px">Reports</div>
<div class="sbl" style="top:248.79999999999998px">Scenarios</div>
<div class="sbl" style="top:283.9px">More</div>
</div>
</div></body></html>
